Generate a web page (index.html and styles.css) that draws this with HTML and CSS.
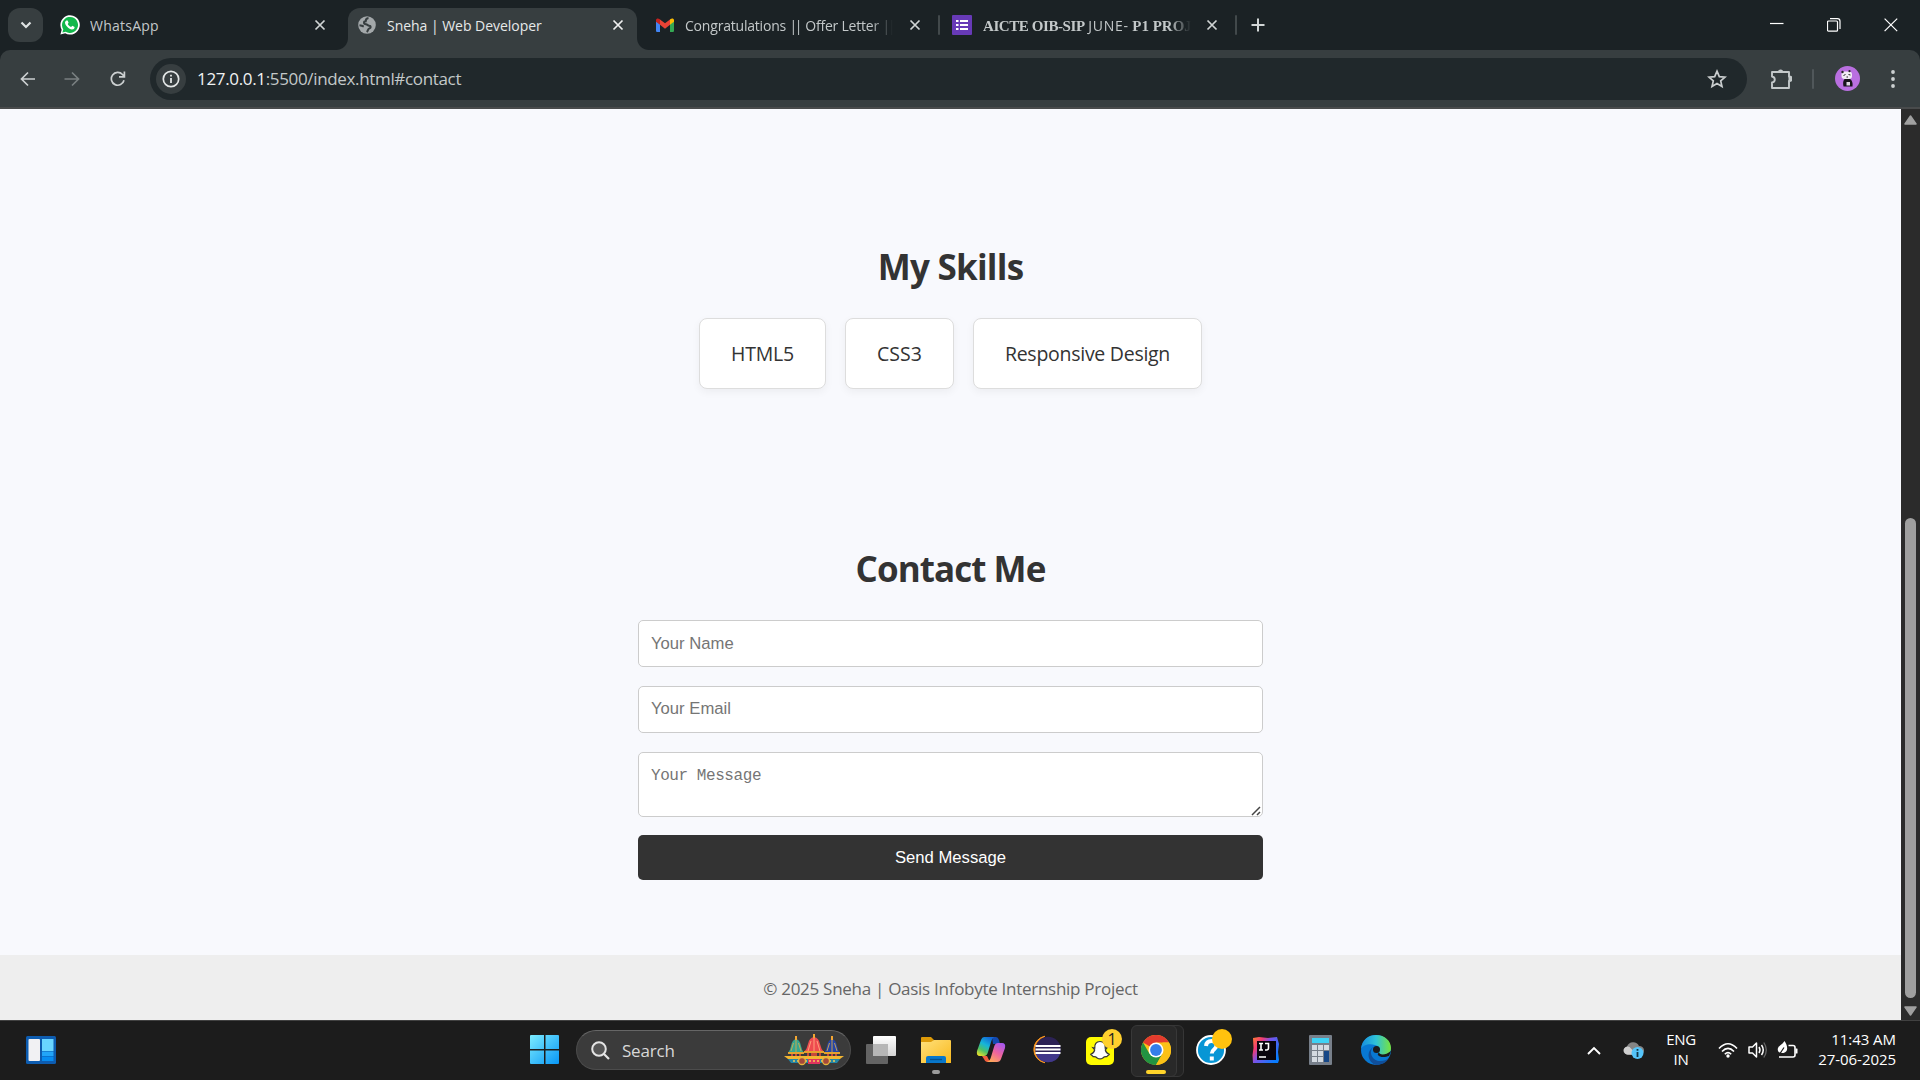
FILE: index.html
```html
<!DOCTYPE html>
<html lang="en">
<head>
<meta charset="utf-8">
<title>Sneha | Web Developer</title>
<link rel="stylesheet" href="styles.css">
</head>
<body>
<div class="screen">
  <header class="tabstrip">
    <button class="tab-search" aria-label="Search tabs"><svg width="12" height="8" viewBox="0 0 12 8"><path d="M1.5 1.5 6 6l4.500-4.500" fill="none" stroke="#dfe3e3" stroke-width="2.200"/></svg></button>
    <div class="tab tab-whatsapp">
      <svg width="20" height="20" viewBox="0 0 20 20"><path d="M.4 19.600 1.700 14.800A9.700 9.700 0 1 1 5.200 18.300Z" fill="#fff"/><path d="M2.400 17.600 3.300 14.300A8 8 0 1 1 5.700 16.700Z" fill="#12b84b"/><path d="M6.400 5.400h1.200l1 2.300-.9 1.200c.8 1.500 1.800 2.400 3.400 3.200l1.200-1.300 2.300 1.100c.1 1.700-1.200 2.500-2.600 2.500-3.200-.5-6.600-3.600-7-6.700 0-1 .6-1.900 1.400-2.300z" fill="#fff"/></svg>
      <span class="tab-title t1">WhatsApp</span>
      <svg class="close" width="12" height="12" viewBox="0 0 12 12"><path d="m1.500 1.500 9 9m0-9-9 9"/></svg>
    </div>
    <div class="tab tab-active">
      <svg width="18" height="18" viewBox="0 0 18 18"><circle cx="9" cy="9" r="8.800" fill="#a3a8aa"/><path d="M10.500 2c-2 .3-2.800 1.500-2.800 3.300-2.200 0-2.400 2.700.2 2.900 1.800.2 1.600 1.600 3.200 1.600 2.200 0 2 2.200.2 2.600-1.600.4-.8 2.200-2.600 3.600M1.500 9.200c2 .2 2.700 1 4.300 1" fill="none" stroke="#373e40" stroke-width="2"/></svg>
      <span class="tab-title t2">Sneha | Web Developer</span>
      <svg class="close" width="12" height="12" viewBox="0 0 12 12"><path d="m1.500 1.500 9 9m0-9-9 9"/></svg>
    </div>
    <div class="tab tab-gmail">
      <svg width="18" height="14" viewBox="0 0 18 14"><path d="M0 3v9.700c0 .7.600 1.300 1.300 1.300H4V6z" fill="#4285f4"/><path d="M14 6v8h2.700c.7 0 1.300-.6 1.300-1.300V3z" fill="#34a853"/><path d="M4 1.500v5.300l5 3.900 5-3.900V1.500L9 5.300z" fill="#ea4335"/><path d="M0 2.100v1.600l4 3.100V1.500L3.400 1C2-.1 0 .6 0 2.100z" fill="#c5221f"/><path d="M14 1.500v5.300l4-3.100V2.100C18 .6 16-.1 14.600 1z" fill="#fbbc04"/></svg>
      <span class="tab-title t3 fade">Congratulations <span class="bars">||</span> Offer Letter <span class="bars">||</span></span>
      <svg class="close" width="12" height="12" viewBox="0 0 12 12"><path d="m1.500 1.500 9 9m0-9-9 9"/></svg>
    </div>
    <i class="sep"></i>
    <div class="tab tab-forms">
      <svg width="20" height="20" viewBox="0 0 20 20"><rect width="20" height="20" rx="1" fill="#673ab7"/><path d="M4 5h2.500v2H4zm4 0h8v2H8zM4 9h2.500v2H4zm4 0h8v2H8zm-4 4h2.500v2H4zm4 0h8v2H8z" fill="#fff"/></svg>
      <span class="tab-title t4 fade"><b class="b1">AICTE OIB-SIP</b> <span class="june">JUNE-</span> <b>P1 PROJ</b></span>
      <svg class="close" width="12" height="12" viewBox="0 0 12 12"><path d="m1.500 1.500 9 9m0-9-9 9"/></svg>
    </div>
    <i class="sep"></i>
    <svg class="plus" width="14" height="14" viewBox="0 0 14 14"><path d="M7 .5v13M.5 7h13" stroke="#d2d6d6" stroke-width="2"/></svg>
    <div class="window-controls">
      <svg width="14" height="14" viewBox="0 0 14 14"><path d="M0 5.500h13.500"/></svg>
      <svg width="14" height="14" viewBox="0 0 14 14"><rect x=".5" y="3" width="10" height="10.200" rx="1"/><path d="M3 .7h7.500q2.500 0 2.500 2.500V11"/></svg>
      <svg width="14" height="14" viewBox="0 0 14 14"><path d="m.6.600 12.600 12.600m0-12.600L.6 13.200"/></svg>
    </div>
  </header>

  <nav class="toolbar-back"><div class="toolbar">
    <svg class="nav" width="16" height="16" viewBox="0 0 16 16"><path d="M15 8H1.500M8 1.500 1.500 8 8 14.500"/></svg>
    <svg class="nav dim" width="16" height="16" viewBox="0 0 16 16"><path d="M.5 8h14M8 1.500 14.500 8 8 14.500"/></svg>
    <svg class="nav" width="16" height="16" viewBox="0 0 16 16"><path d="M14 9.300A6.400 6.400 0 1 1 12.500 3.500L14 5.200M14.400.5v5.300H9"/></svg>
    <div class="omnibox">
      <span class="info"><svg width="18" height="18" viewBox="0 0 18 18"><circle cx="9" cy="9" r="7.700" fill="none" stroke="#e3e6e6" stroke-width="1.700"/><path d="M9 8v5M9 4.700v1.900" stroke="#e3e6e6" stroke-width="1.800"/></svg></span>
      <span class="url"><span class="host">127.0.0.1</span>:5500/index.html#contact</span>
      <svg class="star" width="20" height="20" viewBox="0 0 20 20"><path d="m10 2.200 2.300 5.400 5.800.5-4.400 3.800 1.300 5.700-5-3-5 3 1.300-5.700L1.900 8.100l5.800-.5z" fill="none" stroke="#c9cdce" stroke-width="1.700"/></svg>
    </div>
    <svg class="puzzle" width="22" height="22" viewBox="0 0 22 22"><path d="M2 4h17v4.500h.5a2.200 2.200 0 0 1 0 4.500H19v7H2v-5.500c3.700-.5 3.700-5.500 0-6z" fill="none" stroke="#c4c9ca" stroke-width="1.900" stroke-linejoin="round"/><path d="M8 4a2.600 2.600 0 0 1 5.200 0zm10.500 4.500h1.300a2.200 2.200 0 0 1 0 4.500h-1.300z" fill="#c4c9ca"/></svg>
    <i class="sep"></i>
    <svg class="avatar" width="25" height="25" viewBox="0 0 25 25"><circle cx="12.500" cy="12.500" r="12.500" fill="#b96fe0"/><path d="M8.500 20.500c-1-5 0-8 4-8.500 4 .5 5.500 4 5 8.500z" fill="#17141a"/><path d="M11.500 16h3.500v3.500h-3.500z" fill="#ded8e2"/><rect x="6.500" y="5.500" width="10.500" height="7.500" rx="3" fill="#f1edf4"/><circle cx="7.500" cy="6" r="1.200" fill="#222"/><circle cx="14.500" cy="5.200" r="1.100" fill="#222"/><path d="m8.500 9.500 2-1m3 0 2 .5M11.500 11h1.500" stroke="#222"/></svg>
    <svg class="dots" width="4" height="18" viewBox="0 0 4 18"><circle cx="2" cy="2" r="1.900"/><circle cx="2" cy="9" r="1.900"/><circle cx="2" cy="16" r="1.900"/></svg>
  </div></nav>

  <div class="viewport">
    <main class="page">
      <section class="skills">
        <h2 class="h-skills">My Skills</h2>
        <div class="cards"><div class="card c1">HTML5</div><div class="card c2">CSS3</div><div class="card c3">Responsive Design</div></div>
      </section>
      <section class="contact">
        <h2 class="h-contact">Contact Me</h2>
        <form>
          <input type="text" placeholder="Your Name">
          <input type="email" class="email" placeholder="Your Email">
          <div class="message">
            <textarea placeholder="Your Message"></textarea>
            <svg class="grip" width="10" height="10" viewBox="0 0 10 10"><path d="M1 9 9 1M6 9l3-3" stroke="#444" stroke-width="1.500"/></svg>
          </div>
          <button type="button" class="send">Send Message</button>
        </form>
      </section>
      <footer><span>© 2025 Sneha | Oasis Infobyte Internship Project</span></footer>
    </main>
    <aside class="scrollbar">
      <svg width="13" height="10" viewBox="0 0 13 10"><path d="M6.500 1 12 9H1z" fill="#a0a0a0" stroke="#a0a0a0" stroke-width="1.500" stroke-linejoin="round"/></svg>
      <i class="thumb"></i>
      <svg width="13" height="10" viewBox="0 0 13 10"><path d="M6.500 9 12 1H1z" fill="#a0a0a0" stroke="#a0a0a0" stroke-width="1.500" stroke-linejoin="round"/></svg>
    </aside>
  </div>

  <div class="taskbar">
    <svg class="widgets" width="30" height="28" viewBox="0 0 30 28"><rect width="30" height="28" rx="1.500" fill="#0d5cb0"/><rect x="2.500" y="3" width="11.500" height="22" rx="1" fill="#f1f1f3"/><path d="M16 3h11.500v12H16z" fill="#69d5ff"/><path d="M16 15.500h11.500v4.500H16z" fill="#22a5f8"/><path d="M16 20.500h11.500V25H16z" fill="#078cf0"/></svg>
    <div class="app start"><svg width="30" height="30" viewBox="0 0 30 30"><defs><linearGradient id="win" x2="1" y2="1"><stop stop-color="#7cecff"/><stop offset="1" stop-color="#0896f5"/></linearGradient></defs><path d="M1 0h13v14H0V1q0-1 1-1zm14.500 0H28q1 0 1 1v13H15.500zM0 15.500h14V29H1q-1 0-1-1zm15.500 0H29V28q0 1-1 1H15.500z" fill="url(#win)"/></svg></div>
    <div class="search">
      <svg width="19" height="19" viewBox="0 0 19 19"><circle cx="8" cy="8" r="6.800" fill="#555" stroke="#e4e4e4" stroke-width="2"/><path d="m13 13 5 5" stroke="#e4e4e4" stroke-width="2.200"/></svg>
      <span>Search</span>
      <svg class="chariots" width="60" height="32" viewBox="0 0 60 32">
        <path d="M4 19q2-2 3-7 1-6 5-7 4 1 5 7 1 5 3 7z" fill="#36a790"/><path d="M40 19q2-2 3-7 1-6 5-7 4 1 5 7 1 5 3 7z" fill="#2545a5"/><path d="M20 18q3-3 4-8 1-6 6-7 5 1 6 7 1 5 4 8z" fill="#ee4b4f"/>
        <path d="M12 6v12M9.500 9 7 17M14.500 9l2.500 8M48 6v12M45.500 9 43 17M50.500 9l2.500 8" stroke="#d8a94a" stroke-width=".9"/><path d="M30 4v13M27 7l-3 10M33 7l3 10" stroke="#ffa07a"/>
        <path d="M12 2v4M30 0v4M48 2v4" stroke="#f3a633" stroke-width="2"/>
        <path d="M4 18h16v2H4zm16-1h20v2H20zm20 1h16v2H40z" fill="#e4a12c"/><path d="M7 20h2v4H7zm4 0h2v4h-2zm4 0h2v4h-2zm8-1h2v5h-2zm4 0h6v5h-6zm8 0h2v5h-2zm8 1h2v4h-2zm4 0h2v4h-2zm4 0h2v4h-2z" fill="#c8493b"/>
        <path d="M0 22h60l-4 3H4z" fill="#f2b632"/><path d="M4 25h52l-3 4H7z" fill="#2386a7"/><path d="M24 25h12v5H24z" fill="#df345e"/><path d="M9 27h42" stroke="#f1cd58" stroke-width="1.500" stroke-dasharray="2 2"/>
        <circle cx="18" cy="27" r="3.500" fill="#a5483b" stroke="#e7b43d" stroke-width="1.300"/><circle cx="42" cy="27" r="3.500" fill="#a5483b" stroke="#e7b43d" stroke-width="1.300"/>
      </svg>
    </div>
    <div class="apps">
      <div class="app"><svg width="30" height="30" viewBox="0 0 30 30"><defs><linearGradient id="tv" x2="0" y2="1"><stop stop-color="#fff"/><stop offset="1" stop-color="#d4d4d4"/></linearGradient></defs><rect y="9" width="22" height="20" rx="1" fill="#646464"/><rect x="7" y="1" width="23" height="20" rx="1" fill="url(#tv)"/><path d="M7 9h15v12H7z" fill="#b6b6b6"/></svg></div>
      <div class="app"><svg width="30" height="30" viewBox="0 0 30 30"><defs><linearGradient id="fo" x2="1" y2="1"><stop stop-color="#ffe07b"/><stop offset="1" stop-color="#f9b91d"/></linearGradient></defs><path d="M0 3q0-1 1-1h9l3 3-2 6H0z" fill="#dd9a08"/><path d="M0 7h10l3-2h16q1 0 1 1v22H0z" fill="url(#fo)"/><path d="M5 28v-5q0-2 2-2h16q2 0 2 2v5z" fill="#0877cb"/><path d="M9 24.500h12" stroke="#06518e" stroke-width="1.300"/></svg><i class="running"></i></div>
      <div class="app"><svg width="30" height="30" viewBox="0 0 30 30"><defs><linearGradient id="c1" x1=".7" x2=".2" y2="1"><stop stop-color="#1266d5"/><stop offset=".4" stop-color="#16b5da"/><stop offset=".7" stop-color="#4cc167"/><stop offset="1" stop-color="#e9df2a"/></linearGradient><linearGradient id="c2" x1=".8" x2=".2" y2="1"><stop stop-color="#a657ef"/><stop offset=".5" stop-color="#ee649e"/><stop offset="1" stop-color="#ffac56"/></linearGradient></defs><path d="M16 2h4q2 0 3 3l1 4h-7z" fill="#1349b0"/><path d="M8 2h10q-2 1-3 5l-3 10q-1 4-4 4H4q-4 0-3-5L5 5q1-3 3-3z" fill="url(#c1)"/><path d="M6 21h5l3 6h-3q-2 0-3-3z" fill="#ef5d3d"/><path d="M22 8h4q4 0 3 5l-4 11q-1 3-4 3H11q3-1 4-5l3-10q1-4 4-4z" fill="url(#c2)"/></svg></div>
      <div class="app"><svg width="30" height="30" viewBox="0 0 30 30"><path d="M14 1.200A13.500 13.500 0 0 0 14 27.800 15 15 0 0 1 14 1.200z" fill="#f7941e" stroke="#f7941e"/><circle cx="17" cy="14.500" r="12.800" fill="#2c2255"/><path d="M5 19h24a12.800 12.800 0 0 1-24 0z" fill="#41388a"/><path d="M4.500 11h25m-25 3.500h25m-25 3.500h25" stroke="#fff" stroke-width="2.200"/></svg></div>
      <div class="app"><svg width="30" height="30" viewBox="0 0 30 30"><rect x="0" y="2" width="28" height="28" rx="5" fill="#fffc00"/><path d="M14 6.500c4 0 5.500 3 5.200 6.500l2-.4-1.900 2.400c.7 2.500 2 3.700 4 4.300-.5 1.200-2 1.300-2.500 2.400-2 0-2.500-.2-4 1.300-1.900 1.300-3.700 1.300-5.600 0-1.500-1.500-2-1.300-4-1.300-.5-1.100-2-1.200-2.500-2.400 2-.6 3.300-1.800 4-4.300l-1.900-2.400 2 .4c-.3-3.500 1.200-6.500 5.200-6.500z" fill="#fff" stroke="#373737" stroke-width="1.200"/></svg><span class="badge yellow">1</span></div>
      <div class="app chrome-app"><svg width="30" height="30" viewBox="0 0 30 30"><circle cx="15" cy="15" r="15" fill="#fbc116"/><path d="M15 15 2 7.500A15 15 0 0 1 28 7.500H15z" fill="#e33b2e"/><path d="M2 7.500 8.500 18.700 15 22.500 15 30A15 15 0 0 1 2 7.500z" fill="#229342"/><path d="m15 30 6.500-11.200L15 15l-6.500 4z" fill="#229342"/><path d="m15 30 6.500-11.200V7.500H28A15 15 0 0 1 15 30z" fill="#fbc116"/><circle cx="15" cy="15" r="7.500" fill="#fff"/><circle cx="15" cy="15" r="5.900" fill="#347eea"/></svg><i class="running current"></i></div>
      <div class="app"><svg width="30" height="30" viewBox="0 0 30 30"><circle cx="15" cy="15" r="14" fill="#0796d5" stroke="#fff" stroke-width="1.800"/><path d="M10 11q.5-5 5.500-5 5 0 5 4.500c0 4-4.700 3.500-4.700 8M15.800 21.500v4" fill="none" stroke="#fff" stroke-width="4"/></svg><span class="badge amber"></span></div>
      <div class="app"><svg width="30" height="30" viewBox="0 0 30 30"><defs><linearGradient id="ij" x2="1" y2=".7"><stop stop-color="#ff8030"/><stop offset=".28" stop-color="#f33b75"/><stop offset=".5" stop-color="#7754e9"/><stop offset="1" stop-color="#087cff"/></linearGradient></defs><path d="m2 3 6-1 9 1 9-1 2 7-1 8 1 8-1 3H2l-.5-8 1-7z" fill="url(#ij)"/><path d="M6 6h19v19H6z" fill="#09050d"/><path d="M8 8.500h4m-4 6.500h4M10 8.500V15m4-6.500h3.500V13q0 2-2 2H14M8 22h7" fill="none" stroke="#fff" stroke-width="1.600"/></svg></div>
      <div class="app"><svg width="30" height="30" viewBox="0 0 30 30"><rect x="3" width="23" height="30" rx="1" fill="#777f8a"/><path d="M6 3h17v5H6z" fill="#3ed2f4"/><path d="M6 10h5v5H6zm6 0h5v5h-5zm6 0h5v5h-5zM6 16h5v5H6zm6 0h5v5h-5zm-6 6h5v5H6zm6 0h5v5h-5z" fill="#d4dae1"/><path d="M18 16h5v11h-5z" fill="#164787"/></svg></div>
      <div class="app"><svg width="30" height="30" viewBox="0 0 30 30"><defs><linearGradient id="ed" x2="1"><stop stop-color="#168de0"/><stop offset=".5" stop-color="#2fc2d7"/><stop offset="1" stop-color="#77e43c"/></linearGradient></defs><circle cx="15" cy="15" r="15" fill="#0878d3"/><path d="M0 14C1 4 8 0 15 0c9 0 15 6 15 13 0 5-4 7-8 7-3 0-5-1-4-3 2-3 0-6-4-7C8 8 2 10 0 14z" fill="url(#ed)"/><path d="M12 12c-5 6 0 14 7 14 4 0 7-1 9-3-3 5-8 7-13 7-7-2-11-12-3-18z" fill="#104e99"/><path d="M28 21c-3 1-9 2-11-1-1-1 1-2 1-3 0 3 6 4 12-1z" fill="#1b1b1b"/><circle cx="15.500" cy="14.500" r="3.500" fill="#1b1b1b"/></svg></div>
    </div>
    <div class="tray">
      <svg class="chev" width="14" height="9" viewBox="0 0 14 9"><path d="m1 8 6-6 6 6" fill="none" stroke="#fff" stroke-width="1.900"/></svg>
      <svg class="cloud" width="21" height="19" viewBox="0 0 21 19"><path d="M5 14a4.500 4.500 0 0 1-1-8.500A6.500 6.500 0 0 1 16 5a4 4 0 0 1 1 9z" fill="#858585"/><path d="M4 13.500a4 4 0 1 1 4-6l6 6z" fill="#cfcfcf"/><circle cx="14.500" cy="12" r="6" fill="#55c5fa"/><path d="M14.500 11v5m0-8v1.800" stroke="#12384a" stroke-width="1.800"/></svg>
      <div class="lang"><span>ENG</span><span>IN</span></div>
      <svg class="wifi" width="20" height="16" viewBox="0 0 20 16"><path d="M1 6.500q9-9.500 18 0M4 9.500q6-6.300 12 0M6.800 12.300q3.200-3.200 6.400 0" fill="none" stroke="#fff" stroke-width="1.600"/><circle cx="10" cy="14" r="1.700" fill="#fff"/></svg>
      <svg class="speaker" width="20" height="18" viewBox="0 0 20 18"><path d="M1 6h3.500l4-4v14l-4-4H1z" fill="none" stroke="#fff" stroke-width="1.500" stroke-linejoin="round"/><path d="M11 6q2 3 0 6M13.500 4q3.500 5 0 10" fill="none" stroke="#fff" stroke-width="1.500"/><path d="M15.800 1.500q5 7.500 0 15" fill="none" stroke="#686868" stroke-width="1.300"/></svg>
      <svg class="battery" width="21" height="18" viewBox="0 0 21 18"><path d="M11.500 4.500H16q2 0 2 2V14q0 2-2 2H2" fill="none" stroke="#fff" stroke-width="1.600"/><path d="M18.500 7.500H20q.5 0 .5.500v4q0 .5-.5.500h-1.500z" fill="#fff"/><path d="M7.500 0c3 4 4.500 11-1 12C2 12.500 0 10 1 7c1-2.500 4-3 6.500-7z" fill="#fff"/><path d="m1 15.500 6-9" stroke="#1b1b1b" stroke-width="1.200"/></svg>
      <div class="clock"><span>11:43 AM</span><span>27-06-2025</span></div>
    </div>
  </div>
</div>
</body>
</html>
```
FILE: styles.css
```css
* { box-sizing: border-box; }
body { margin: 0; font-family: "Open Sans", "Noto Sans", sans-serif; overflow: hidden; }
svg { display: block; flex: none; }
.screen { width: 1920px; height: 1080px; display: flex; flex-direction: column; }

.tabstrip { height: 50px; background: #1b2225; display: flex; align-items: center; color: #c3c8c9; padding-left: 8px; }
.tab-search { width: 35px; height: 34px; border: 0; border-radius: 12px; background: #373e40; display: flex; align-items: center; justify-content: center; padding: 0; }
.tab { display: flex; align-items: center; height: 42px; align-self: flex-end; padding-bottom: 8px; }
.tab-title { font-size: 14px; line-height: 20px; white-space: nowrap; overflow: hidden; margin-top: 1px; }
.close { margin-left: auto; }
.close path { stroke: #d0d4d4; stroke-width: 1.7; }
.tab-whatsapp { width: 283px; padding-left: 17px; margin-right: 22px; gap: 10px; }
.t1 { letter-spacing: .25px; }
.tab-active { position: relative; width: 289px; background: #373e40; border-radius: 12px 12px 0 0; padding: 0 13px 8px 10px; color: #e6e9e9; gap: 11px; }
.tab-active::before, .tab-active::after { content: ""; position: absolute; bottom: 0; width: 12px; height: 12px; }
.tab-active::before { left: -12px; background: radial-gradient(circle at 0 0, #1b2225 11.5px, #373e40 12.5px); }
.tab-active::after { right: -12px; background: radial-gradient(circle at 100% 0, #1b2225 11.5px, #373e40 12.5px); }
.tab-active .close path { stroke: #f0f0f0; }
.t2 { letter-spacing: -.03px; }
.tab-gmail { width: 284px; padding-left: 19px; gap: 11px; }
.t3 { width: 208px; letter-spacing: -.2px; }
.bars { letter-spacing: -2.3px; margin-right: 1.5px; }
.fade { -webkit-mask-image: linear-gradient(to right, #000 calc(100% - 22px), transparent); mask-image: linear-gradient(to right, #000 calc(100% - 22px), transparent); }
.sep { width: 2px; height: 20px; background: #42494b; flex: none; border-radius: 1px; }
.tabstrip > .sep { margin-left: 17px; }
.tab-forms { width: 278px; padding-left: 12px; gap: 11px; }
.t4 { width: 208px; }
.t4 b { font: bold 15px/20px "Liberation Serif", serif; }
.b1 { letter-spacing: -.42px; }
.june { letter-spacing: .7px; }
.plus { margin-left: 14px; }
.window-controls { margin: 0 22px 0 auto; display: flex; gap: 43px; }
.window-controls path, .window-controls rect { fill: none; stroke: #fff; stroke-width: 1.2; }

.toolbar-back { background: #1b2225; height: 59px; }
.toolbar { height: 59px; background: #373e40; border-radius: 10px 10px 0 0; border-bottom: 2px solid #494b4c; display: flex; align-items: center; padding-left: 20px; }
.nav { margin-right: 28px; fill: none; stroke: #ccd0d1; stroke-width: 1.7; }
.nav.dim { stroke: #797f80; margin-right: 30px; }
.nav:nth-child(3) { margin-right: 24px; }
.omnibox { width: 1597px; height: 42px; border-radius: 21px; background: #20282b; display: flex; align-items: center; padding: 0 20px 0 6px; }
.info { width: 30px; height: 30px; border-radius: 50%; background: #373e40; display: flex; align-items: center; justify-content: center; }
.url { margin-left: 11px; font-size: 17px; letter-spacing: -.34px; color: #c3c8c9; line-height: 24px; padding-top: 1px; }
.host { color: #f0f2f2; }
.star { margin-left: auto; }
.puzzle { margin-left: 23px; }
.toolbar > .sep { margin-left: 20px; background: #50575a; }
.avatar { margin-left: 21px; }
.dots { margin-left: 31px; fill: #ccd0d1; }

.viewport { height: 911px; display: flex; }
.page { width: 1901px; background: #f8f9fd; display: flex; flex-direction: column; color: #333; }
h2 { margin: 0; font-size: 35px; line-height: 48px; text-align: center; }
.h-skills { letter-spacing: -.75px; }
.h-contact { letter-spacing: -.95px; }
.skills { padding-top: 134px; height: 411px; }
.cards { display: flex; justify-content: center; gap: 19px; margin-top: 27px; }
.card { height: 71px; background: #fff; border: 1px solid #ddd; border-radius: 8px; box-shadow: 0 3px 8px rgba(0,0,0,.05); font-size: 19.5px; display: flex; align-items: center; justify-content: center; }
.c1 { width: 127px; letter-spacing: -.2px; }
.c2 { width: 109px; }
.c3 { width: 229px; letter-spacing: -.27px; }
.contact { padding-top: 25px; height: 435px; }
form { width: 625px; margin: 27px auto 0; display: flex; flex-direction: column; gap: 19px; }
input, textarea { width: 100%; border: 1px solid #ccc; border-radius: 5px; background: #fff; padding: 0 12px; outline: 0; font: 16.67px "Liberation Sans", Arial, sans-serif; }
input { height: 47px; }
.email { padding-bottom: 2px; }
input::placeholder, textarea::placeholder { color: #757575; opacity: 1; }
.message { position: relative; height: 65px; }
textarea { display: block; height: 65px; padding-top: 14px; font: 16px/19px "Liberation Mono", monospace; letter-spacing: -.43px; resize: none; }
.grip { position: absolute; right: 2px; bottom: 1px; }
.send { height: 45px; margin-top: -1px; border: 0; border-radius: 5px; background: #333; color: #fff; font: 16.67px "Liberation Sans", Arial, sans-serif; }
footer { height: 65px; background: #eee; display: flex; align-items: center; justify-content: center; font-size: 17px; letter-spacing: -.28px; color: #666; padding-top: 2px; }
.scrollbar { width: 19px; background: #2b2b2b; display: flex; flex-direction: column; align-items: center; padding: 6px 0 4px; }
.thumb { width: 11px; height: 480px; border-radius: 6px; background: #9f9f9f; margin: auto 0 8px; }

.taskbar { height: 60px; background: #1c1c1c; border-top: 1px solid #414141; display: flex; align-items: center; color: #fff; padding-bottom: 1px; }
.widgets { margin-left: 26px; }
.app { position: relative; width: 55px; height: 50px; display: flex; align-items: center; justify-content: center; }
.start { margin-left: 461px; }
.search { width: 275px; height: 40px; margin-left: 4px; border-radius: 20px; background: #3b3b3b; border: 1px solid #4c4c4c; border-top-color: #666; display: flex; align-items: center; padding: 0 6px 0 14px; color: #d8d8d8; font-size: 17px; letter-spacing: -.2px; }
.search span { margin-left: 12px; }
.chariots { margin-left: auto; }
.apps { display: flex; margin-left: 2px; }
.running { position: absolute; bottom: 1px; left: 24px; width: 8px; height: 4px; border-radius: 2px; background: #9b9b9b; }
.current { left: 18px; width: 20px; background: #ffd42a; }
.badge { position: absolute; width: 20px; height: 20px; left: 29px; top: 4px; border-radius: 50%; color: #222; font-size: 16px; line-height: 20px; text-align: center; }
.yellow { background: #ffd02e; }
.amber { background: #ffc20e; }
.chrome-app svg { position: relative; }
.chrome-app::before { content: ""; position: absolute; left: 9px; top: 0; width: 45px; height: 50px; border-radius: 6px; border: 1px solid #363636; background: #232323; }
.chrome-app::after { content: ""; position: absolute; left: 3px; top: 0; width: 44px; height: 50px; border-radius: 6px; border: 1px solid #383838; background: #292929; }
.chrome-app svg, .chrome-app .running { z-index: 1; }
.tray { margin-left: auto; margin-right: 24px; display: flex; align-items: center; font-size: 15px; line-height: 20px; }
.cloud { margin-left: 22px; }
.lang, .clock { display: flex; flex-direction: column; padding-bottom: 2px; }
.lang { align-items: center; width: 34px; margin-left: 20px; }
.lang span { letter-spacing: -.3px; }
.wifi { margin-left: 20px; }
.speaker { margin-left: 10px; }
.battery { margin-left: 9px; }
.clock { width: 98px; align-items: flex-end; }
.clock span { letter-spacing: -.05px; }
```
